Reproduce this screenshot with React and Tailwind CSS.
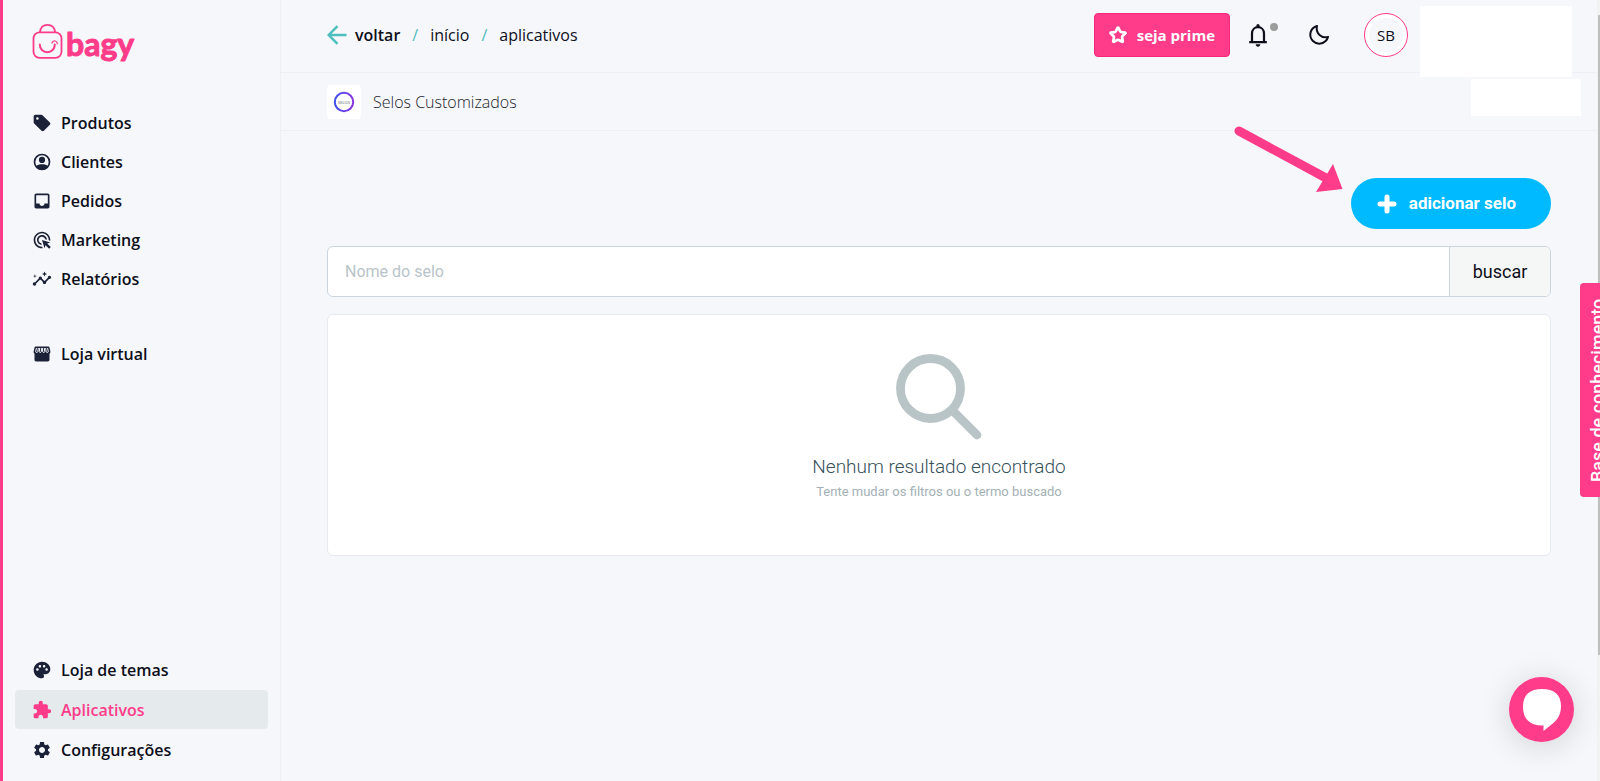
import { useState } from "react";
import {
  MdSell,
  MdInbox,
  MdAdsClick,
  MdInsights,
  MdPalette,
  MdExtension,
  MdSettings,
} from "react-icons/md";
import { BiMoon } from "react-icons/bi";
import { Star } from "lucide-react";

const UserIcon = ({ className }) => (
  <svg viewBox="0 0 24 24" className={className} fill="currentColor" aria-hidden="true">
    <circle cx="12" cy="12" r="9" fill="none" stroke="currentColor" strokeWidth="2" />
    <circle cx="12" cy="9.5" r="3.7" />
    <path d="M4.500 17c2-1.600 4.500-2.300 7.500-2.300s5.500.7 7.500 2.300c-1.700 2.700-4.400 4.300-7.500 4.300S6.200 19.700 4.500 17z" />
  </svg>
);

const StoreIcon = ({ className }) => (
  <svg viewBox="0 0 24 24" className={className} aria-hidden="true">
    <path
      fill="currentColor"
      d="M4.500 3h15c.8 0 1.300.5 1.500 1.200l1 4.600c.2 1.200-.2 2.300-1 3V19c0 1.100-.9 2-2 2H5c-1.100 0-2-.9-2-2v-7.200c-.8-.7-1.200-1.800-1-3l1-4.600C3.200 3.500 3.700 3 4.500 3z"
    />
    <path
      fill="none"
      stroke="#f6f7fb"
      strokeWidth="1.200"
      d="M5.300 4.800l-.9 4.400c0 1.200 2.400 1.200 2.600 0l.6-4.400M9.200 4.800l-.5 4.400c0 1.200 2.500 1.200 2.600 0V4.800M12.700 4.800v4.400c.1 1.200 2.600 1.200 2.600 0l-.5-4.400M16.400 4.800l.6 4.400c.2 1.200 2.600 1.200 2.600 0l-.9-4.400"
    />
  </svg>
);

const mainLinks = [
  { label: "Produtos", icon: MdSell },
  { label: "Clientes", icon: UserIcon },
  { label: "Pedidos", icon: MdInbox },
  { label: "Marketing", icon: MdAdsClick },
  { label: "Relatórios", icon: MdInsights },
];

const footerLinks = [
  { label: "Loja de temas", icon: MdPalette },
  { label: "Aplicativos", icon: MdExtension, active: true },
  { label: "Configurações", icon: MdSettings },
];

const NavItem = ({ label, icon: Icon, active }) => (
  <li>
    <a
      href="#"
      aria-current={active ? "page" : undefined}
      className={`flex h-[39px] items-center gap-[9px] rounded pl-[17px] font-semibold ${
        active ? "bg-[#e5eaed] text-[#ff3c8a]" : "text-[#0d0f1a]"
      }`}
    >
      <Icon className={`size-5 shrink-0 ${active ? "text-[#ff3c8a]" : "text-[#1b2136]"}`} />
      {label}
    </a>
  </li>
);

const Logo = () => (
  <svg width="104" height="46" viewBox="0 0 104 46" role="img" aria-label="bagy">
    <g fill="none" stroke="#ff3c8a" strokeLinecap="round">
      <rect x="1.500" y="10.300" width="28" height="25.500" rx="6" strokeWidth="1.800" />
      <path d="M8 10c.5-4.500 3.500-7.200 7.500-7.200s7 2.700 7.500 7.200" strokeWidth="1.800" />
      <path d="M7.800 22.500c0 4.500 3.200 7.700 7.500 7.700s7.500-3.200 7.500-7.700" strokeWidth="2" />
      <path d="M20 21c.6-1.600 1.900-2.400 3.300-2 1.400.4 2 1.400 2 2.700" strokeWidth="1.300" />
    </g>
    <text
      x="34"
      y="34"
      fontSize="32"
      fill="#ff3c8a"
      stroke="#ff3c8a"
      strokeWidth="1"
      strokeLinejoin="round"
      className="font-['Lato',sans-serif] font-bold"
    >
      bagy
    </text>
  </svg>
);

const Sidebar = () => (
  <aside className="flex w-[281px] shrink-0 flex-col border-r border-l-3 border-r-[#eceff3] border-l-[#ff3c8a] px-3 pb-3">
    <a href="#" className="mt-[22px] ml-[17px] w-fit">
      <Logo />
    </a>
    <nav className="mt-[35px] flex grow flex-col justify-between">
      <div className="flex flex-col gap-9">
        <ul>
          {mainLinks.map((link) => (
            <NavItem key={link.label} {...link} />
          ))}
        </ul>
        <ul>
          <NavItem label="Loja virtual" icon={StoreIcon} />
        </ul>
      </div>
      <ul className="flex flex-col gap-px">
        {footerLinks.map((link) => (
          <NavItem key={link.label} {...link} />
        ))}
      </ul>
    </nav>
  </aside>
);

const Header = () => (
  <header className="relative flex h-[73px] items-center justify-between border-b border-[#eceff3] pr-[189px] pb-0.5 pl-[46px]">
    <nav className="flex items-center gap-3 text-[#0d0f1a]">
      <a href="#" className="flex items-center gap-2 font-semibold">
        <svg width="20" height="20" viewBox="0 0 20 20" fill="none" stroke="#4dbdbd" strokeWidth="2.400" aria-hidden="true">
          <path d="M19.500 10H1.500M10.500 1.200L1.700 10l8.800 8.800" />
        </svg>
        voltar
      </a>
      <span className="text-[#4dbdbd]">/</span>
      <a href="#">início</a>
      <span className="text-[#4dbdbd]">/</span>
      <a href="#">aplicativos</a>
    </nav>

    <div className="flex items-center text-[#0d0f1a]">
      <button className="flex h-11 items-center gap-2.5 rounded border border-[#f5287b] bg-[#ff3c8a] px-3.5 text-[15px] font-bold text-white">
        <Star className="size-[18px]" strokeWidth={3.6} />
        seja prime
      </button>
      <button aria-label="Notificações" className="relative ml-4">
        <svg width="24" height="24" viewBox="0 0 24 24" aria-hidden="true">
          <path
            d="M6 19v-8.500C6 6.800 8.600 4.200 12 4.200s6 2.600 6 6.300V19M3.200 19.200h17.600"
            fill="none"
            stroke="currentColor"
            strokeWidth="2.200"
          />
          <path d="M10.400 4.500V2.600a1.600 1.600 0 0 1 3.200 0v1.900zM9.700 21.300h4.600c0 1.400-1 2.400-2.300 2.400s-2.300-1-2.300-2.400z" fill="currentColor" />
        </svg>
        <span className="absolute top-0 -right-2 size-2 rounded-full bg-[#9c9c9c]" />
      </button>
      <button aria-label="Modo escuro" className="ml-[37px]">
        <BiMoon className="size-6" />
      </button>
      <button className="ml-[33px] size-11 rounded-full border border-[#ff3c8a] bg-[#f6f7fb] text-[15px] ring-4 ring-white ring-inset">
        SB
      </button>
    </div>

    <div className="absolute top-1.5 right-[25px] z-10 h-[71px] w-[152px] bg-white" />
  </header>
);

const SearchIcon = () => (
  <svg width="86" height="86" viewBox="0 0 86 86" fill="none" stroke="#b9c4c6" aria-hidden="true">
    <circle cx="34.500" cy="34.500" r="30" strokeWidth="8.800" />
    <path d="M56 56l25 25" strokeWidth="8.800" strokeLinecap="round" />
  </svg>
);

const App = () => {
  const [term, setTerm] = useState("");

  return (
    <div className="relative flex min-h-screen overflow-hidden bg-[#f6f7fb] font-['Open_Sans','Noto_Sans',sans-serif] text-base">
      <Sidebar />

      <div className="min-w-0 grow">
        <Header />

        <div className="flex h-[58px] items-center justify-between border-b border-[#eceff3] pr-4 pl-[46px]">
          <div className="flex items-center gap-3">
            <div className="flex size-[34px] items-center justify-center rounded bg-white">
              <svg width="22" height="22" viewBox="0 0 22 22" aria-hidden="true">
                <defs>
                  <linearGradient id="selo">
                    <stop offset="0" stopColor="#3f4ff0" />
                    <stop offset="1" stopColor="#8a35e0" />
                  </linearGradient>
                </defs>
                <circle cx="11" cy="11" r="9.200" fill="none" stroke="url(#selo)" strokeWidth="2" />
                <text x="11" y="12.500" fontSize="4" textAnchor="middle" fill="#55555f">
                  SELOS
                </text>
              </svg>
            </div>
            <h1 className="font-light text-[#23252e]">Selos Customizados</h1>
          </div>
          <div className="mt-1.5 h-[37px] w-[110px] self-start bg-white" />
        </div>

        <main className="flex flex-col px-[46px] pt-[47px] font-['Roboto',sans-serif]">
          <button className="flex h-[51px] items-center gap-3 self-end rounded-full bg-[#00baff] pr-[35px] pl-[26px] text-[17px] font-bold text-white">
            <svg width="20" height="20" viewBox="0 0 20 20" stroke="currentColor" strokeWidth="5" strokeLinecap="round" aria-hidden="true">
              <path d="M10 3v14M3 10h14" />
            </svg>
            adicionar selo
          </button>

          <form
            className="mt-[17px] flex h-[51px] overflow-hidden rounded-md border border-[#cbd5de] bg-white"
            onSubmit={(e) => e.preventDefault()}
          >
            <input
              type="text"
              aria-label="Nome do selo"
              placeholder="Nome do selo"
              value={term}
              onChange={(e) => setTerm(e.target.value)}
              className="min-w-0 grow px-[17px] text-base outline-none placeholder:text-[#b9c4c9]"
            />
            <button className="w-[101px] border-l border-[#cbd5de] bg-[#f5f7f7] text-lg text-[#0d0f1a]">
              buscar
            </button>
          </form>

          <section className="mt-[17px] flex flex-col items-center rounded-md border border-[#e6e9f0] bg-white pt-[39px] pb-[53px]">
            <SearchIcon />
            <h2 className="mt-[13px] text-[19px] leading-7 font-light text-[#37515b]">Nenhum resultado encontrado</h2>
            <p className="mt-px text-[13px] leading-5 text-[#a3b1b5]">Tente mudar os filtros ou o termo buscado</p>
          </section>
        </main>
      </div>

      {/* Scrollbar */}
      <div className="flex w-[3px] shrink-0 justify-end bg-[#f1f2f3] pt-[15px]">
        <div className="h-[640px] w-0.5 bg-[#bfbfbf]" />
      </div>

      {/* Pointer to the add button */}
      <svg width="112" height="70" viewBox="0 0 112 70" className="absolute top-[125px] right-[256px]" aria-hidden="true">
        <path d="M7 6l87 47" stroke="#ff3c8a" strokeWidth="9" strokeLinecap="round" />
        <path d="M110.500 64L101 39 84 67z" fill="#ff3c8a" />
      </svg>

      <button className="absolute top-[283px] -right-5 h-[214px] w-10 rotate-180 rounded-r bg-[#ff3c8a] pl-1 font-['Roboto',sans-serif] text-lg font-medium text-white [writing-mode:vertical-rl]">
        Base de conhecimento
      </button>

      <button
        aria-label="Abrir chat"
        className="fixed right-[26px] bottom-[39px] flex size-[65px] items-center justify-center rounded-full bg-[#ff3c8a] shadow-[0_4px_32px_rgba(0,0,0,0.15)]"
      >
        <svg width="38" height="42" viewBox="0 0 38 42" fill="#fff" aria-hidden="true">
          <path d="M19 0C31 0 38 5.500 38 17c0 8-3 13-7 16.500L20.500 42v-5.500C7 37 0 30 0 18 0 5.500 7 0 19 0z" />
        </svg>
      </button>
    </div>
  );
};

export default App;
